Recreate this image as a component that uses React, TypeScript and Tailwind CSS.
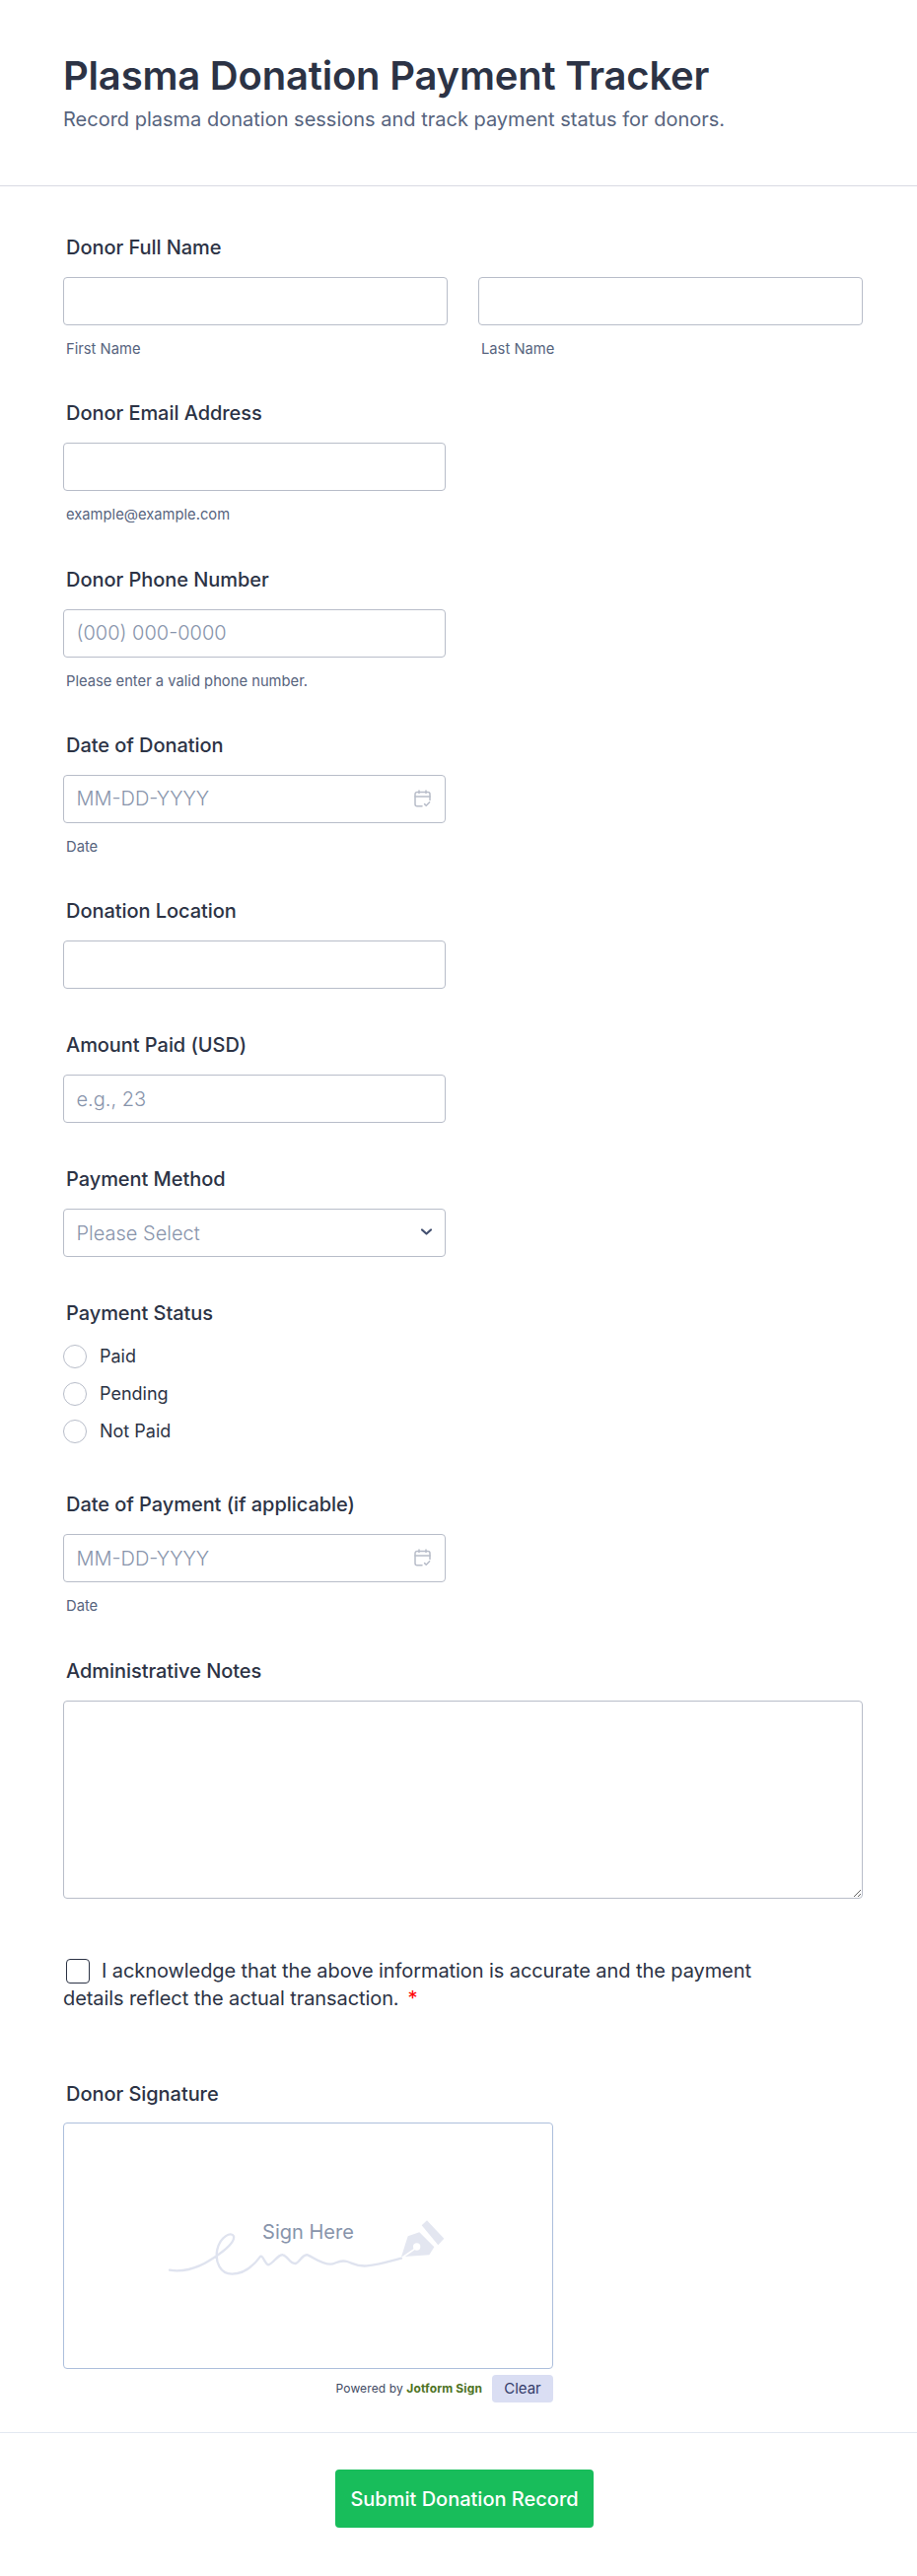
import React from 'react';

const Label = ({ children }: { children: React.ReactNode }) => (
  <div className="h-6 pl-[3px] text-[20px] leading-6 font-medium tracking-[-0.05px] text-[#2c3345]">{children}</div>
);

const Sub = ({ children }: { children: React.ReactNode }) => (
  <div className="mt-[14px] h-[20px] pl-[3px] text-[14.75px] leading-[20px] text-[#57647e]">{children}</div>
);

const inputCls =
  'block h-[49px] w-[388px] rounded border border-[#b8bdc9] bg-white px-[12.5px] text-[20px] font-light text-[#2c3345] outline-none placeholder:text-[#8894ab]';

const CalendarIcon = () => (
  <svg className="absolute right-[15px] top-[15px]" width="17" height="18" viewBox="0 0 17 18" fill="none" stroke="#b8bdc9" strokeWidth="1.5" strokeLinecap="round" strokeLinejoin="round">
    <path d="M8 16.8H3a2 2 0 0 1-2-2V4.4a2 2 0 0 1 2-2h11a2 2 0 0 1 2 2v6" />
    <path d="M1 7h15" />
    <path d="M5 1v2.6M12 1v2.6" />
    <path d="M10.6 14.6l1.6 1.6 3.4-3.4" />
  </svg>
);

const DateField = ({ label, className }: { label: string; className: string }) => (
  <div className={className}>
    <Label>{label}</Label>
    <div className="relative mt-[18px] w-[388px]">
      <input className={inputCls} placeholder="MM-DD-YYYY" />
      <CalendarIcon />
    </div>
    <Sub>Date</Sub>
  </div>
);

const Radio = ({ label }: { label: string }) => (
  <div className="flex h-6 items-center">
    <span className="h-6 w-6 rounded-full border border-[#b8bdc9] bg-white" />
    <span className="ml-[13px] text-[18px] leading-6 text-[#2c3345]">{label}</span>
  </div>
);

export default function App() {
  return (
    <div className="min-h-[2613px] bg-white font-['Inter',sans-serif]">
      <header className="h-[189px] border-b border-[#d8dae3] px-16 pt-[50px]">
        <h1 className="text-[40px] leading-[54px] font-semibold tracking-[-0.2px] text-[#2c3345]">Plasma Donation Payment Tracker</h1>
        <p className="mt-[2px] text-[20px] leading-[30px] text-[#57647e]">Record plasma donation sessions and track payment status for donors.</p>
      </header>

      <main className="pt-[50px] pr-[54px] pl-16">
        <div>
          <Label>Donor Full Name</Label>
          <div className="mt-[18px] flex gap-[31px]">
            <div className="w-[390px]">
              <input className={inputCls + ' !w-full'} />
              <Sub>First Name</Sub>
            </div>
            <div className="w-[390px]">
              <input className={inputCls + ' !w-full'} />
              <Sub>Last Name</Sub>
            </div>
          </div>
        </div>

        <div className="mt-[43.3px]">
          <Label>Donor Email Address</Label>
          <input className={inputCls + ' mt-[18px]'} />
          <Sub>example@example.com</Sub>
        </div>

        <div className="mt-[43.3px]">
          <Label>Donor Phone Number</Label>
          <input className={inputCls + ' mt-[18px]'} placeholder="(000) 000-0000" />
          <Sub>Please enter a valid phone number.</Sub>
        </div>

        <DateField label="Date of Donation" className="mt-[43.3px]" />

        <div className="mt-[43.3px]">
          <Label>Donation Location</Label>
          <input className={inputCls + ' mt-[18px]'} />
        </div>

        <div className="mt-[45px]">
          <Label>Amount Paid (USD)</Label>
          <input className={inputCls + ' mt-[18px]'} placeholder="e.g., 23" />
        </div>

        <div className="mt-[45px]">
          <Label>Payment Method</Label>
          <div className="relative mt-[18px] flex h-[49px] w-[388px] items-center rounded border border-[#b8bdc9] px-[12.5px] text-[20px] font-light text-[#8894ab]">
            Please Select
            <svg className="absolute top-[18px] right-[11px]" width="14" height="10" viewBox="0 0 14 10" fill="none" stroke="#435070" strokeWidth="2.2" strokeLinecap="round" strokeLinejoin="round">
              <path d="M2 2.5l4.5 4 4.5-4" />
            </svg>
          </div>
        </div>

        <div className="mt-[45px]">
          <Label>Payment Status</Label>
          <div className="mt-[20px] flex flex-col gap-[14px]">
            <Radio label="Paid" />
            <Radio label="Pending" />
            <Radio label="Not Paid" />
          </div>
        </div>

        <DateField label="Date of Payment (if applicable)" className="mt-[50px]" />

        <div className="mt-[44px]">
          <Label>Administrative Notes</Label>
          <textarea className="mt-[18px] block h-[201px] w-[811px] rounded border border-[#b8bdc9] bg-white outline-none" />
        </div>

        <div className="mt-[59px] w-[740px] text-[20px] leading-[28px] tracking-[-0.08px] text-[#2c3345]">
          <span className="mr-[12px] ml-[3px] inline-block h-[25px] w-6 rounded border border-[#2c3345] align-[-6px]" />
          I acknowledge that the above information is accurate and the payment details reflect the actual transaction.
          <span className="ml-[9px] text-[#f00]">*</span>
        </div>

        <div className="mt-[71px]">
          <Label>Donor Signature</Label>
          <div className="relative mt-[17px] flex h-[250px] w-[497px] items-center justify-center rounded border border-[#adbfdc]">
            <svg width="340" height="120" viewBox="8 54 1020 360" fill="none">
              <path
                d="M95 308C130 315 175 305 215 280C250 258 295 225 290 205C283 190 250 205 240 245C232 285 250 320 285 320C320 320 350 295 370 268C378 258 385 290 395 292C410 290 425 258 440 262C455 265 460 290 478 288C490 285 500 258 515 262C535 270 555 290 585 290C600 290 610 275 635 282C655 288 665 298 695 295C730 292 770 280 800 272"
                stroke="#dfe3ef"
                strokeWidth="7"
                strokeLinecap="round"
              />
              <path d="M800 268L820 205L855 193L900 238L885 262Z" fill="#e3e6f0" />
              <path d="M862 172L878 157L930 212L912 232Z" fill="#e3e6f0" />
              <path d="M803 270L840 244" stroke="#fff" strokeWidth="5" />
              <circle cx="847" cy="237" r="11" fill="#fff" />
            </svg>
            <span className="absolute top-[96px] left-0 w-full text-center text-[20px] leading-7 text-[#8894ab]">Sign Here</span>
          </div>
          <div className="mt-[6px] flex w-[497px] items-center justify-end">
            <span className="text-[12px] tracking-[0.12px] text-[#3f4a63]">
              Powered by <b className="font-bold text-[#4e7324]">Jotform Sign</b>
            </span>
            <button className="ml-[10px] h-[28px] w-[62px] rounded bg-[#dadef3] text-[15px] text-[#343c6a]">Clear</button>
          </div>
        </div>
      </main>

      <footer className="mt-[30px] flex justify-center border-t border-[#e3e9f1] pt-[37px] pb-[50px] pl-3">
        <button className="h-[59px] w-[262px] rounded bg-[#18bd5b] text-[20px] font-medium text-white">Submit Donation Record</button>
      </footer>
    </div>
  );
}
